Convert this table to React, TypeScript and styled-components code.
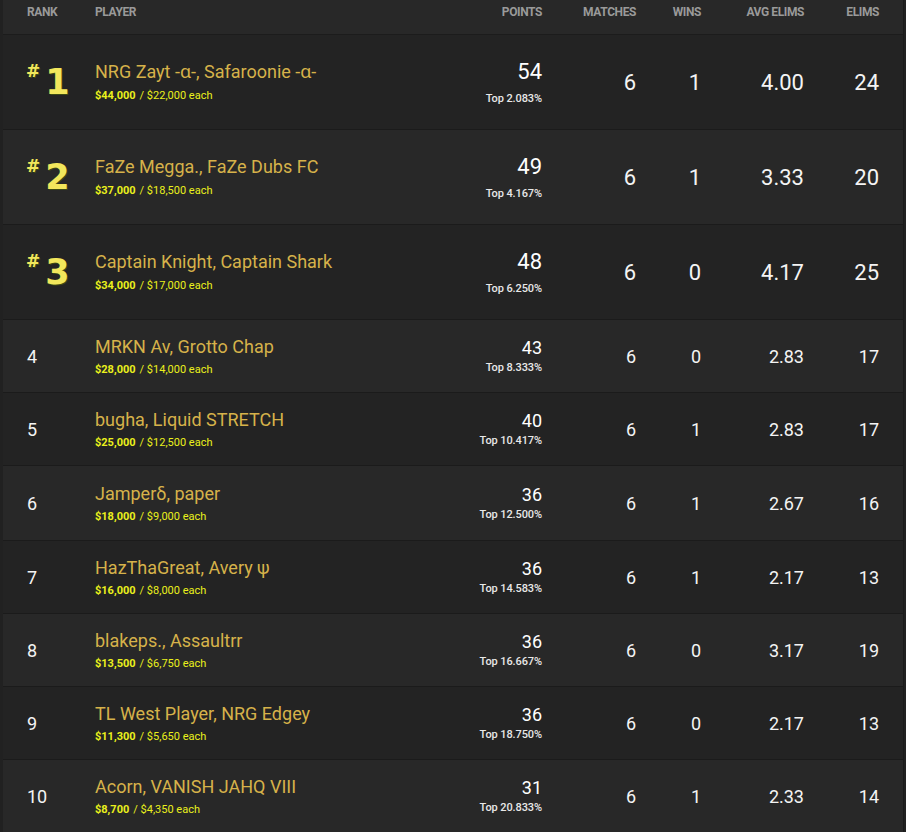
import React from "react";
import styled, { createGlobalStyle } from "styled-components";

const Global = createGlobalStyle`
  html, body { margin: 0; padding: 0; background: #212121; }
  body { font-family: Roboto, "Noto Sans", Arial, sans-serif; }
`;

type Row = {
  rank: number;
  name: string;
  total: string;
  each: string;
  points: number;
  top: string;
  matches: number;
  wins: number;
  avg: string;
  elims: number;
  extra?: number;
};

const rows: Row[] = [
  { rank: 1, name: "NRG Zayt -ɑ-, Safaroonie -ɑ-", total: "$44,000", each: "$22,000", points: 54, top: "2.083", matches: 6, wins: 1, avg: "4.00", elims: 24 },
  { rank: 2, name: "FaZe Megga., FaZe Dubs FC", total: "$37,000", each: "$18,500", points: 49, top: "4.167", matches: 6, wins: 1, avg: "3.33", elims: 20 },
  { rank: 3, name: "Captain Knight, Captain Shark", total: "$34,000", each: "$17,000", points: 48, top: "6.250", matches: 6, wins: 0, avg: "4.17", elims: 25 },
  { rank: 4, name: "MRKN Av, Grotto Chap", total: "$28,000", each: "$14,000", points: 43, top: "8.333", matches: 6, wins: 0, avg: "2.83", elims: 17 },
  { rank: 5, name: "bugha, Liquid STRETCH", total: "$25,000", each: "$12,500", points: 40, top: "10.417", matches: 6, wins: 1, avg: "2.83", elims: 17 },
  { rank: 6, name: "Jamperδ, paper", total: "$18,000", each: "$9,000", points: 36, top: "12.500", matches: 6, wins: 1, avg: "2.67", elims: 16, extra: 2 },
  { rank: 7, name: "HazThaGreat, Avery ψ", total: "$16,000", each: "$8,000", points: 36, top: "14.583", matches: 6, wins: 1, avg: "2.17", elims: 13 },
  { rank: 8, name: "blakeps., Assaultrr", total: "$13,500", each: "$6,750", points: 36, top: "16.667", matches: 6, wins: 0, avg: "3.17", elims: 19 },
  { rank: 9, name: "TL West Player, NRG Edgey", total: "$11,300", each: "$5,650", points: 36, top: "18.750", matches: 6, wins: 0, avg: "2.17", elims: 13 },
  { rank: 10, name: "Acorn, VANISH JAHQ VIII", total: "$8,700", each: "$4,350", points: 31, top: "20.833", matches: 6, wins: 1, avg: "2.33", elims: 14 },
];

const Table = styled.div`
  margin-left: 3px;
  width: 900px;
  border-right: 1px solid #1b1b1b;
  background: #262626;
`;

const Grid = styled.div`
  display: grid;
  grid-template-columns: 68px 1fr 100px 94px 65px 103px 75px;
  padding: 0 24px;
  align-items: center;
`;

const HeaderRow = styled(Grid)`
  height: 34px;
  align-items: start;
  background: #282828;
  border-bottom: 1px solid #1c1c1c;
`;

const HeadCell = styled.div<{ $right?: boolean }>`
  padding-top: 5px;
  font-family: Roboto, Arial, sans-serif;
  font-weight: 700;
  font-size: 12px;
  letter-spacing: -0.4px;
  color: #9a9a9a;
  text-transform: uppercase;
  text-align: ${(p) => (p.$right ? "right" : "left")};
`;

const BodyRow = styled(Grid)<{ $top: boolean; $odd: boolean; $extra: number }>`
  height: ${(p) => (p.$top ? 94 : 72) + p.$extra}px;
  background: ${(p) => (p.$odd ? "#232323" : "#282828")};
  border-bottom: 1px solid #1b1b1b;
`;

const RankPlain = styled.div`
  color: #f4f4f4;
  font-size: 18px;
`;

const Badge = styled.div`
  display: flex;
  align-items: flex-start;
  gap: 5px;
  margin-left: -1px;
  color: #f2e75c;
  font-family: "DejaVu Sans", sans-serif;
  font-weight: 700;
  text-shadow: 1px 1px 0 #3c4a14;
`;

const Hash = styled.span`
  font-size: 17px;
  line-height: 17px;
  margin-top: -4px;
`;

const BigDigit = styled.span`
  font-size: 35px;
  line-height: 30px;
  letter-spacing: -1px;
`;

const Player = styled.div`
  display: flex;
  flex-direction: column;
  min-width: 0;
`;

const Name = styled.div`
  color: #d6b24a;
  font-size: 18px;
  line-height: 22px;
  white-space: nowrap;
`;

const Prize = styled.div<{ $top: boolean }>`
  margin-top: ${(p) => (p.$top ? 6 : 5)}px;
  font-size: 11px;
  line-height: 14px;
  color: #eaf01c;
  white-space: nowrap;
`;

const PrizeTotal = styled.b`
  font-weight: 700;
  margin-right: 4px;
`;

const Points = styled.div`
  display: flex;
  flex-direction: column;
  align-items: flex-end;
  text-align: right;
`;

const PointsValue = styled.div<{ $top: boolean }>`
  color: #ffffff;
  font-size: ${(p) => (p.$top ? 22 : 18)}px;
  line-height: ${(p) => (p.$top ? 26 : 20)}px;
`;

const TopPct = styled.div<{ $top: boolean }>`
  margin-top: ${(p) => (p.$top ? 7 : 3)}px;
  color: #e8e8e8;
  font-size: 11px;
  line-height: 13px;
  font-weight: 500;
  letter-spacing: -0.1px;
`;

const Stat = styled.div<{ $top: boolean }>`
  text-align: right;
  color: #f4f4f4;
  font-size: ${(p) => (p.$top ? 22 : 18)}px;
`;

export default function App() {
  return (
    <>
      <Global />
      <Table>
        <HeaderRow>
          <HeadCell>Rank</HeadCell>
          <HeadCell>Player</HeadCell>
          <HeadCell $right>Points</HeadCell>
          <HeadCell $right>Matches</HeadCell>
          <HeadCell $right>Wins</HeadCell>
          <HeadCell $right>Avg Elims</HeadCell>
          <HeadCell $right>Elims</HeadCell>
        </HeaderRow>
        {rows.map((r, i) => {
          const top = r.rank <= 3;
          return (
            <BodyRow key={r.rank} $top={top} $odd={i % 2 === 0} $extra={r.extra ?? 0}>
              {top ? (
                <Badge>
                  <Hash>#</Hash>
                  <BigDigit>{r.rank}</BigDigit>
                </Badge>
              ) : (
                <RankPlain>{r.rank}</RankPlain>
              )}
              <Player>
                <Name>{r.name}</Name>
                <Prize $top={top}>
                  <PrizeTotal>{r.total}</PrizeTotal>/ {r.each} each
                </Prize>
              </Player>
              <Points>
                <PointsValue $top={top}>{r.points}</PointsValue>
                <TopPct $top={top}>Top {r.top}%</TopPct>
              </Points>
              <Stat $top={top}>{r.matches}</Stat>
              <Stat $top={top}>{r.wins}</Stat>
              <Stat $top={top}>{r.avg}</Stat>
              <Stat $top={top}>{r.elims}</Stat>
            </BodyRow>
          );
        })}
      </Table>
    </>
  );
}
